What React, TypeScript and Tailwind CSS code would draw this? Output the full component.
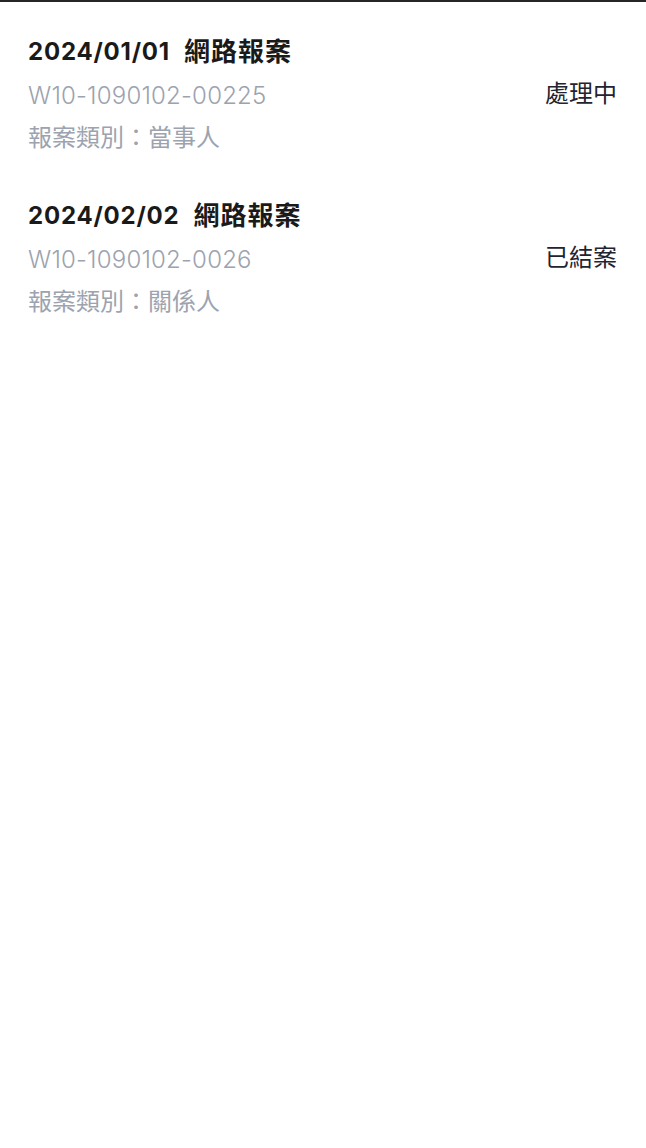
import React from "react";

const items = [
  { date: "2024/01/01", kind: "網路報案", id: "W10-1090102-00225", cat: "報案類別：當事人", status: "處理中" },
  { date: "2024/02/02", kind: "網路報案", id: "W10-1090102-0026", cat: "報案類別：關係人", status: "已結案" },
];

export default function App() {
  return (
    <div
      className="min-h-[1148px] w-full bg-white border-t-2 border-[#262626]"
      style={{ fontFamily: 'Inter, "Noto Sans CJK TC", sans-serif' }}
    >
      <div className="flex flex-col pt-[34px]">
        {items.map((it, i) => (
          <div key={i} className={`pl-[28px] pr-[29px] ${i > 0 ? "mt-[46px]" : ""}`}>
            <div className="flex items-center h-[32px] text-[24px] leading-[32px] font-bold text-[#1a1a1a]">
              <span className="tracking-[0.8px]">{it.date}</span>
              <span className="ml-[14px] text-[26px] leading-[32px] tracking-[1px]">{it.kind}</span>
            </div>
            <div className="mt-[12px] flex items-center justify-between">
              <span className="text-[24px] leading-[32px] font-light tracking-[0.2px] text-[#9ca3af]">{it.id}</span>
              <span className="text-[24px] leading-[32px] text-[#1f2430] -translate-y-[2px]">{it.status}</span>
            </div>
            <div className="mt-[10px] text-[24px] leading-[32px] text-[#9ca3af]">{it.cat}</div>
          </div>
        ))}
      </div>
    </div>
  );
}
